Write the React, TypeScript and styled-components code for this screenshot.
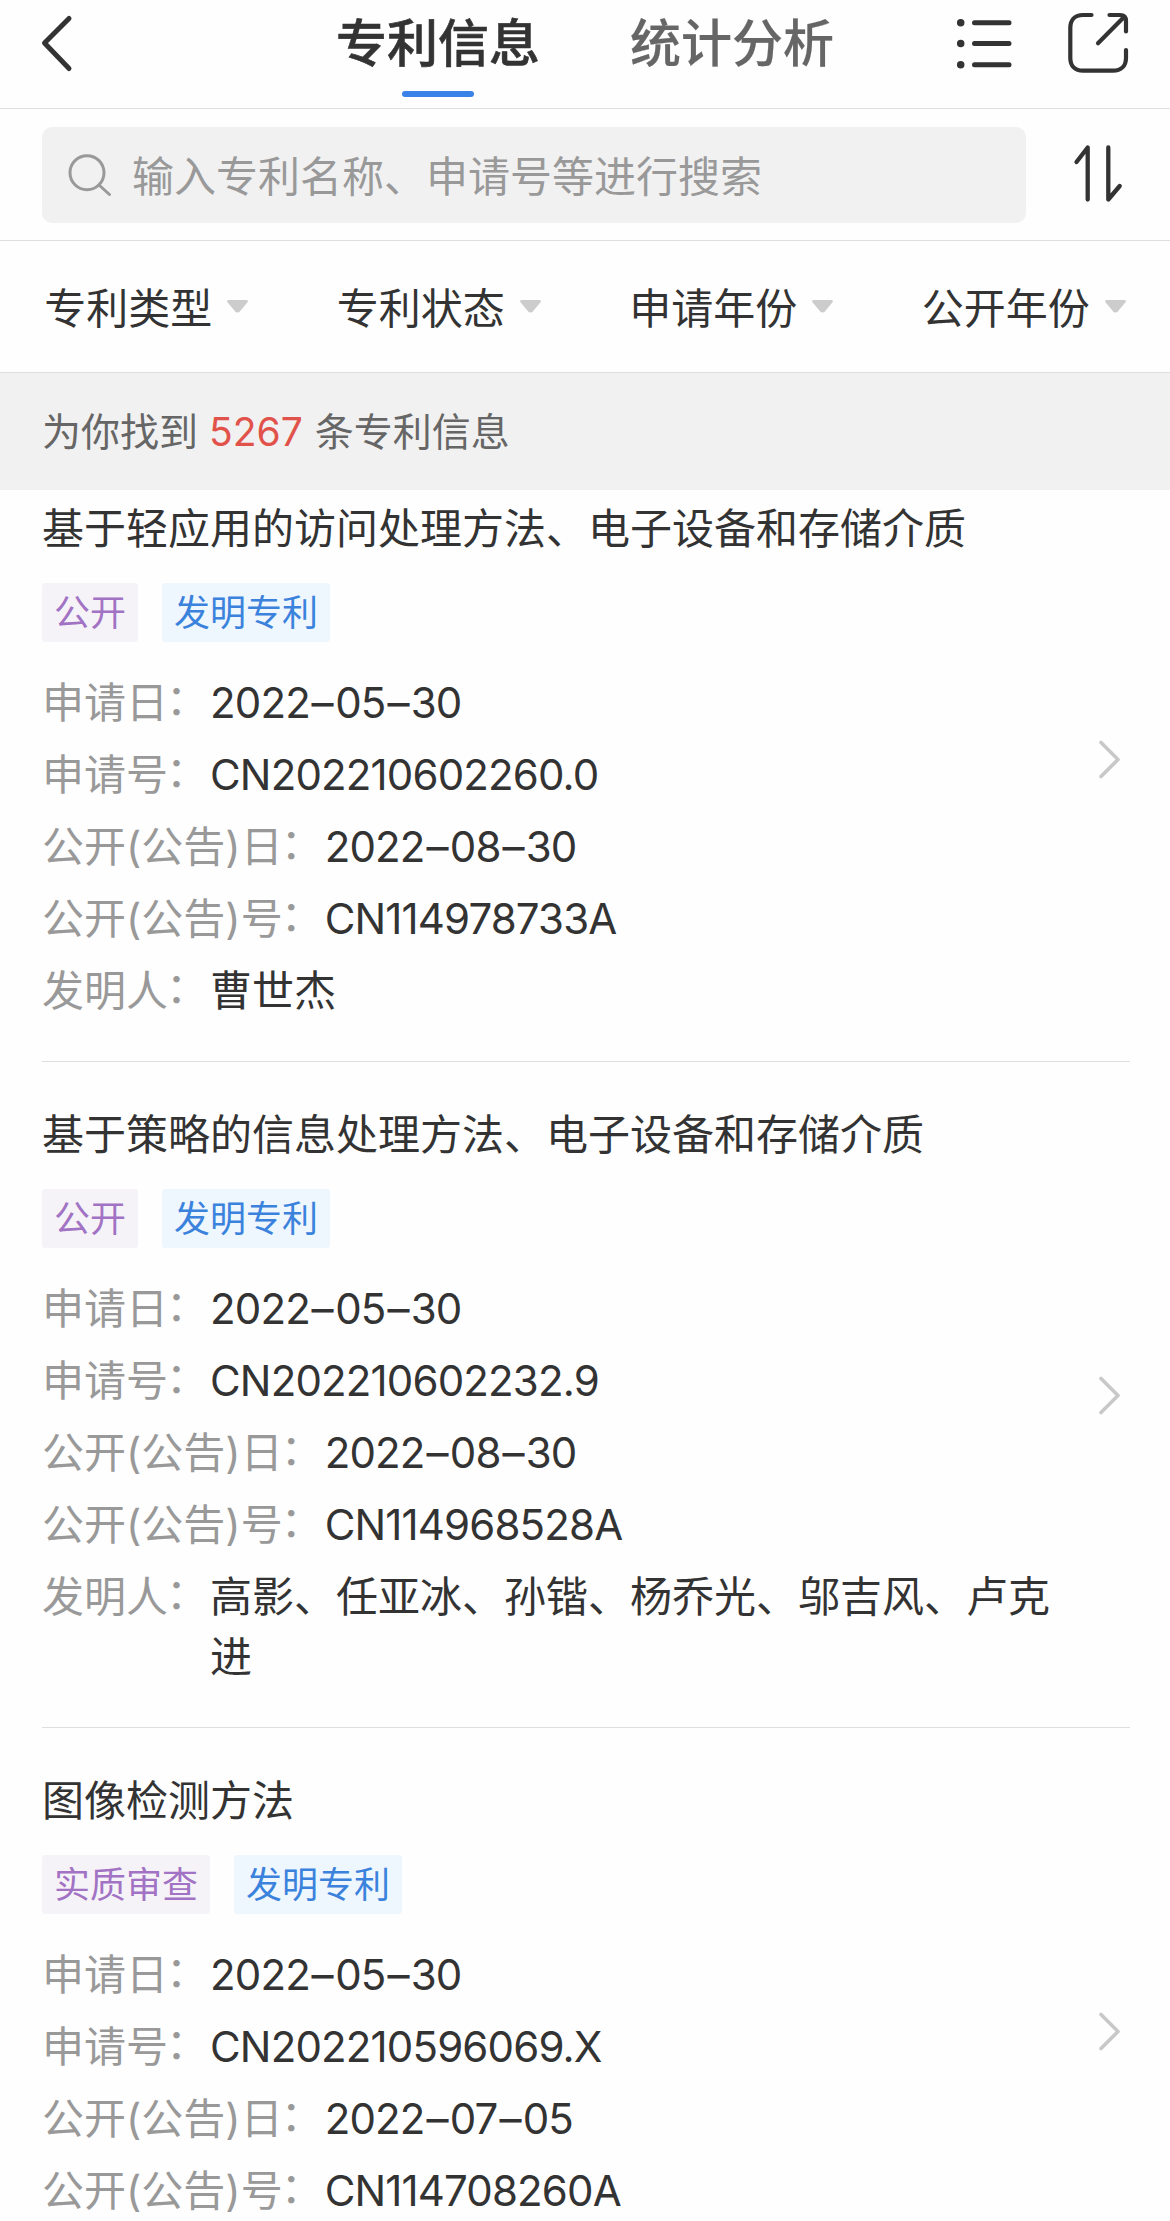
import React from 'react';
import styled, { createGlobalStyle } from 'styled-components';

const GlobalStyle = createGlobalStyle`
  * { box-sizing: border-box; }
  body {
    margin: 0;
    background: #fefefe;
    color: #333;
    font-family: Inter, 'Noto Sans CJK SC', sans-serif;
    font-size: 42px;
    line-height: 60px;
    font-weight: 400;
  }
`;

const Screen = styled.main`
  width: 1170px;
  height: 2221px;
  overflow: hidden;
  background: #fefefe;
`;

const Header = styled.header`
  display: flex;
  align-items: flex-start;
  height: 109px;
  padding-left: 39px;
  border-bottom: 1px solid #dedede;
`;

const Tabs = styled.nav`
  display: flex;
  gap: 90px;
  margin-left: 259px;
  width: 614px;
`;

const Tab = styled.div<{ $active?: boolean }>`
  display: flex;
  flex-direction: column;
  align-items: center;
  width: 204px;
  padding-top: 14px;
  font-size: 51px;
  font-weight: 500;
  color: ${(p) => (p.$active ? '#333' : '#666')};
  -webkit-text-stroke: ${(p) => (p.$active ? '0.6px' : '0.2px')} currentColor;
`;

const Underline = styled.span`
  width: 72px;
  height: 6px;
  margin-top: 17px;
  border-radius: 3px;
  background: #3a82e8;
`;

const Icon = styled.svg<{ $top?: number; $left?: number; $color?: string; $weight?: number }>`
  display: block;
  flex: none;
  margin-top: ${(p) => p.$top ?? 0}px;
  margin-left: ${(p) => p.$left ?? 0}px;
  fill: none;
  stroke: ${(p) => p.$color ?? '#333'};
  stroke-width: ${(p) => p.$weight ?? 5};
  stroke-linecap: round;
  stroke-linejoin: round;
`;

const Bullets = styled.path`
  stroke-width: 7.5;
`;

const SearchBar = styled.div`
  display: flex;
  align-items: flex-start;
  height: 132px;
  padding: 18px 0 0 42px;
  border-bottom: 1px solid #dedede;
`;

const SearchBox = styled.div`
  display: flex;
  align-items: center;
  width: 984px;
  height: 96px;
  padding-left: 26px;
  gap: 19px;
  border-radius: 10px;
  background: #f1f1f1;
  color: #999;
`;

const Placeholder = styled.span`
  padding-top: 3px;
`;

const Filters = styled.div`
  display: grid;
  grid-template-columns: repeat(4, 1fr);
  height: 132px;
  padding-top: 5px;
  border-bottom: 1px solid #dedede;
`;

const Filter = styled.div`
  display: flex;
  align-items: center;
  justify-content: center;
  gap: 15px;
`;

const Caret = styled.svg`
  display: block;
  margin-top: -5px;
  fill: #ccc;
`;

const Summary = styled.div`
  position: relative;
  z-index: 1;
  height: 117px;
  padding: 29px 42px;
  background: #f1f1f1;
  color: #666;
  font-size: 39px;
`;

const Count = styled.span`
  margin-right: 1px;
  color: #e1524a;
`;

const List = styled.section`
  margin-top: -34px;
  padding: 0 40px 0 42px;
`;

const Card = styled.article`
  display: flex;
  align-items: center;
  min-height: 606px;
  padding: 43px 0 40px;
  border-bottom: 1px solid #dedede;
`;

const CardBody = styled.div`
  align-self: flex-start;
  width: 1057px;
`;

const Title = styled.h2`
  margin: 0;
  font-size: 42px;
  font-weight: 400;
`;

const Tags = styled.div`
  display: flex;
  gap: 24px;
  margin: 24px 0 31px;
`;

const Tag = styled.span<{ $kind: 'status' | 'type' }>`
  height: 59px;
  padding: 0 12px;
  border-radius: 3px;
  font-size: 36px;
  line-height: 60px;
  color: ${(p) => (p.$kind === 'status' ? '#a273c4' : '#3a82dc')};
  background: ${(p) => (p.$kind === 'status' ? '#f6f3f8' : '#eef6fe')};
`;

const Fields = styled.dl`
  display: flex;
  flex-direction: column;
  gap: 12px;
  margin: 0;
`;

const Field = styled.div`
  display: flex;
`;

const Label = styled.dt`
  flex: none;
  color: #999;
`;

const Colon = styled.span`
  display: inline-block;
  transform: translate(-2px, -3px);
`;

const Value = styled.dd<{ $latin: boolean }>`
  margin: 0;
  width: 850px;
  letter-spacing: ${(p) => (p.$latin ? '-0.85px' : 'normal')};
`;

const Dash = styled.span`
  display: inline-block;
  margin: 0 2.500px;
  transform: scaleX(1.05);
`;

type Patent = { title: string; status: string; fields: [string, string][] };

const patents: Patent[] = [
  {
    title: '基于轻应用的访问处理方法、电子设备和存储介质',
    status: '公开',
    fields: [
      ['申请日', '2022–05–30'],
      ['申请号', 'CN202210602260.0'],
      ['公开(公告)日', '2022–08–30'],
      ['公开(公告)号', 'CN114978733A'],
      ['发明人', '曹世杰'],
    ],
  },
  {
    title: '基于策略的信息处理方法、电子设备和存储介质',
    status: '公开',
    fields: [
      ['申请日', '2022–05–30'],
      ['申请号', 'CN202210602232.9'],
      ['公开(公告)日', '2022–08–30'],
      ['公开(公告)号', 'CN114968528A'],
      ['发明人', '高影、任亚冰、孙锴、杨乔光、邬吉风、卢克进'],
    ],
  },
  {
    title: '图像检测方法',
    status: '实质审查',
    fields: [
      ['申请日', '2022–05–30'],
      ['申请号', 'CN202210596069.X'],
      ['公开(公告)日', '2022–07–05'],
      ['公开(公告)号', 'CN114708260A'],
    ],
  },
];

const FieldValue = ({ value }: { value: string }) => (
  <Value $latin={/^[\x20-\x7e–]+$/.test(value)}>
    {value.split('–').map((part, i) => (
      <React.Fragment key={i}>
        {i > 0 && <Dash>–</Dash>}
        {part}
      </React.Fragment>
    ))}
  </Value>
);

const PatentCard = ({ patent }: { patent: Patent }) => (
  <Card>
    <CardBody>
      <Title>{patent.title}</Title>
      <Tags>
        <Tag $kind="status">{patent.status}</Tag>
        <Tag $kind="type">发明专利</Tag>
      </Tags>
      <Fields>
        {patent.fields.map(([label, value]) => (
          <Field key={label}>
            <Label>
              {label}
              <Colon>：</Colon>
            </Label>
            <FieldValue value={value} />
          </Field>
        ))}
      </Fields>
    </CardBody>
    <Icon $color="#c8c8c8" $weight={3.6} $top={-3} width="22" height="40" viewBox="0 0 22 40">
      <path d="M2 3.500L19 20.500L2 37.500" />
    </Icon>
  </Card>
);

export default function App() {
  return (
    <>
      <GlobalStyle />
      <Screen>
        <Header>
          <Icon $top={12} width="38" height="62" viewBox="0 0 38 62">
            <path d="M30 6.500L5.500 31L30 56.500" />
          </Icon>
          <Tabs>
            <Tab $active>
              专利信息
              <Underline />
            </Tab>
            <Tab>统计分析</Tab>
          </Tabs>
          <Icon $top={15} $left={2} width="62" height="56" viewBox="952 15 62 56">
            <path d="M974.500 22.700H1009M974.500 43.500H1009M974.500 64.700H1009" />
            <Bullets d="M960.700 22.700h.01M960.700 43.500h.01M960.700 64.700h.01" />
          </Icon>
          <Icon $top={10} $left={51} $weight={4.2} width="66" height="66" viewBox="1065 10 66 66">
            <path d="M1091.500 15H1083C1075 15 1070.300 20 1070.300 28V58C1070.300 66 1075 70.700 1083 70.700H1113C1121 70.700 1126 66 1126 58V50" />
            <path d="M1109.500 15H1120C1124 15 1126 17 1126 21V31.500M1124.500 16.500L1098 43.300" />
          </Icon>
        </Header>
        <SearchBar>
          <SearchBox>
            <Icon $color="#999" $weight={3} width="45" height="46" viewBox="68 150 45 46">
              <circle cx="87" cy="170.700" r="17" />
              <path d="M99 183L109.500 192.500" />
            </Icon>
            <Placeholder>输入专利名称、申请号等进行搜索</Placeholder>
          </SearchBox>
          <Icon $top={14} $left={44} $weight={4.3} width="56" height="64" viewBox="1070 141 56 64">
            <path d="M1076.500 162L1087.700 147.500V199.500M1108.300 147.500V199.500L1119.700 186" />
          </Icon>
        </SearchBar>
        <Filters>
          {['专利类型', '专利状态', '申请年份', '公开年份'].map((name) => (
            <Filter key={name}>
              {name}
              <Caret width="21" height="13" viewBox="0 0 21 13">
                <path d="M2 0H19Q22 0 20.300 2.500L13 11.300Q10.500 13.800 8 11.300L.7 2.500Q-1 0 2 0Z" />
              </Caret>
            </Filter>
          ))}
        </Filters>
        <Summary>
          为你找到 <Count>5267</Count> 条专利信息
        </Summary>
        <List>
          {patents.map((patent) => (
            <PatentCard key={patent.title} patent={patent} />
          ))}
        </List>
      </Screen>
    </>
  );
}
